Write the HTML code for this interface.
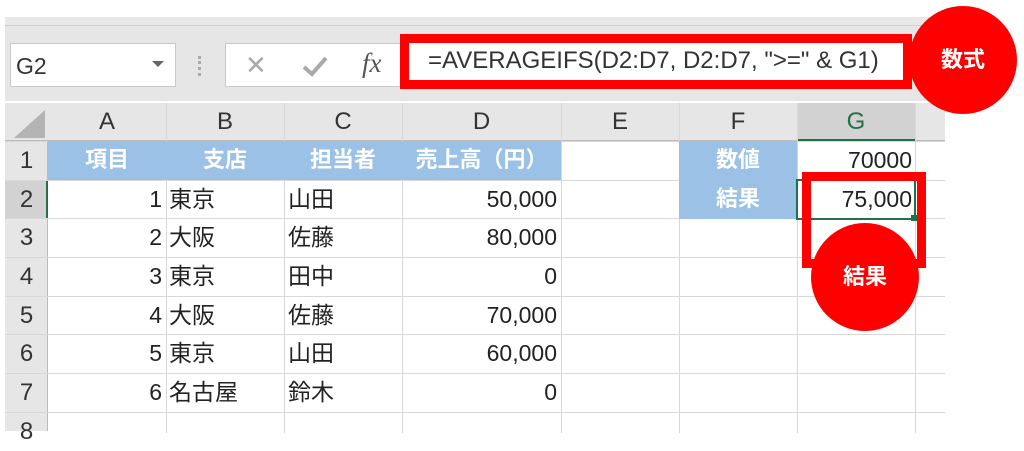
<!DOCTYPE html><html><head><meta charset="utf-8"><style>
body{margin:0;width:1024px;height:430px;overflow:hidden;background:#fff;position:relative;font-family:"Liberation Sans","Noto Sans CJK JP",sans-serif;}
div{position:absolute;box-sizing:border-box}
.t{font-size:23px;color:#222;line-height:38px;white-space:nowrap}
.h{font-size:24px;color:#333;text-align:center}
.w{color:#fff;font-weight:bold;text-align:center;font-size:22px}
</style></head><body>
<div style="left:5px;top:17px;width:940px;height:9px;background:#e8e8e8;border-bottom:1px solid #d0d0d0"></div>
<div style="left:5px;top:26px;width:940px;height:75px;background:#e6e6e6"></div>
<div style="left:10px;top:43px;width:166px;height:44px;background:#fff;border:1px solid #c8c8c8;font-size:23px;color:#333;line-height:44px;padding-left:5px">G2</div>
<div style="left:152px;top:61px;width:0;height:0;border-left:6px solid transparent;border-right:6px solid transparent;border-top:6px solid #666"></div>
<div style="left:198px;top:56px;width:3px;height:20px;border-left:3px dotted #aaa"></div>
<div style="left:225px;top:43px;width:180px;height:44px;background:#fff;border:1px solid #c8c8c8"></div>
<div style="left:245px;top:50px;font-size:26px;color:#aaa">✕</div>
<svg style="position:absolute;left:302px;top:55px" width="26" height="22"><path d="M2 12 L10 19 L24 3" stroke="#aaa" stroke-width="4" fill="none"/></svg>
<div style="left:362px;top:48px;font-size:27px;color:#555;font-family:'Liberation Serif',serif;font-style:italic">fx</div>
<div style="left:405px;top:40px;width:500px;height:44px;background:#fff"></div>
<div style="left:400px;top:34px;width:512px;height:55px;border:9px solid #f00"></div>
<div style="left:428px;top:47px;font-size:24px;color:#333">=AVERAGEIFS(D2:D7, D2:D7, "&gt;=" &amp; G1)</div>
<div style="left:5px;top:103px;width:940px;height:38px;background:#e6e6e6;border-bottom:1px solid #bbb"></div>
<div style="left:5px;top:141px;width:43px;height:290px;background:#e6e6e6;border-right:1px solid #bbb"></div>
<div style="left:14px;top:110px;width:0;height:0;border-left:31px solid transparent;border-bottom:28px solid #b4b4b4"></div>
<div style="left:797px;top:103px;width:118px;height:38px;background:#d2d2d2;border-bottom:2px solid #217346"></div>
<div style="left:5px;top:180px;width:43px;height:39px;background:#d2d2d2;border-right:2px solid #217346"></div>
<div id="g"></div>
<script>
var cols=[48,166,284,402,561,679,797,915],L="ABCDEFG",rows=[141,180,218,257,296,334,373,412,450],h='';
for(var i=0;i<7;i++){h+='<div class="h" style="left:'+cols[i]+'px;top:103px;width:'+(cols[i+1]-cols[i])+'px;line-height:38px;'+(i==6?'color:#217346':'')+'">'+L[i]+'</div>';}
for(var i=1;i<7;i++)h+='<div style="left:'+cols[i]+'px;top:103px;width:1px;height:330px;background:#d8d8d8"></div>';
h+='<div style="left:915px;top:103px;width:1px;height:330px;background:#d8d8d8"></div>';
for(var r=0;r<8;r++){h+='<div style="left:5px;top:'+rows[r]+'px;width:940px;height:1px;background:#d8d8d8"></div>';h+='<div class="h" style="left:5px;top:'+rows[r]+'px;width:43px;line-height:39px;color:#333">'+(r+1)+'</div>';}
document.getElementById('g').outerHTML=h;
</script>
<div style="left:48px;top:141px;width:513px;height:39px;background:#9bc2e6"></div>
<div style="left:679px;top:141px;width:118px;height:78px;background:#9bc2e6"></div>
<div class="w t" style="left:48px;top:141px;width:118px;color:#fff">項目</div>
<div class="w t" style="left:166px;top:141px;width:118px;color:#fff">支店</div>
<div class="w t" style="left:284px;top:141px;width:118px;color:#fff">担当者</div>
<div class="w t" style="left:402px;top:141px;width:159px;color:#fff">売上高（円）</div>
<div class="w t" style="left:679px;top:141px;width:118px;color:#fff">数値</div>
<div class="w t" style="left:679px;top:180px;width:118px;color:#fff">結果</div>
<div class="t" style="left:797px;top:141px;width:115px;text-align:right">70000</div>
<div style="left:796px;top:179px;width:120px;height:41px;border:2px solid #217346"></div>
<div style="left:911px;top:215px;width:6px;height:6px;background:#217346"></div>
<div class="t" style="left:797px;top:180px;width:115px;text-align:right">75,000</div>
<div id="d"></div>
<script>
var D=[[1,'東京','山田','50,000'],[2,'大阪','佐藤','80,000'],[3,'東京','田中','0'],[4,'大阪','佐藤','70,000'],[5,'東京','山田','60,000'],[6,'名古屋','鈴木','0']],h='';
for(var r=0;r<6;r++){var y=rows[r+1];
h+='<div class="t" style="left:48px;top:'+y+'px;width:114px;text-align:right">'+D[r][0]+'</div>';
h+='<div class="t" style="left:169px;top:'+y+'px">'+D[r][1]+'</div>';
h+='<div class="t" style="left:288px;top:'+y+'px">'+D[r][2]+'</div>';
h+='<div class="t" style="left:402px;top:'+y+'px;width:155px;text-align:right">'+D[r][3]+'</div>';}
document.getElementById('d').outerHTML=h;
</script>
<div style="left:802px;top:172px;width:124px;height:96px;border:9px solid #f00"></div>
<div style="left:909px;top:6px;width:108px;height:108px;border-radius:50%;background:#f00;color:#fff;font-weight:bold;font-size:22px;text-align:center;line-height:108px">数式</div>
<div style="left:811px;top:223px;width:108px;height:108px;border-radius:50%;background:#f00;color:#fff;font-weight:bold;font-size:22px;text-align:center;line-height:108px">結果</div>
</body></html>
